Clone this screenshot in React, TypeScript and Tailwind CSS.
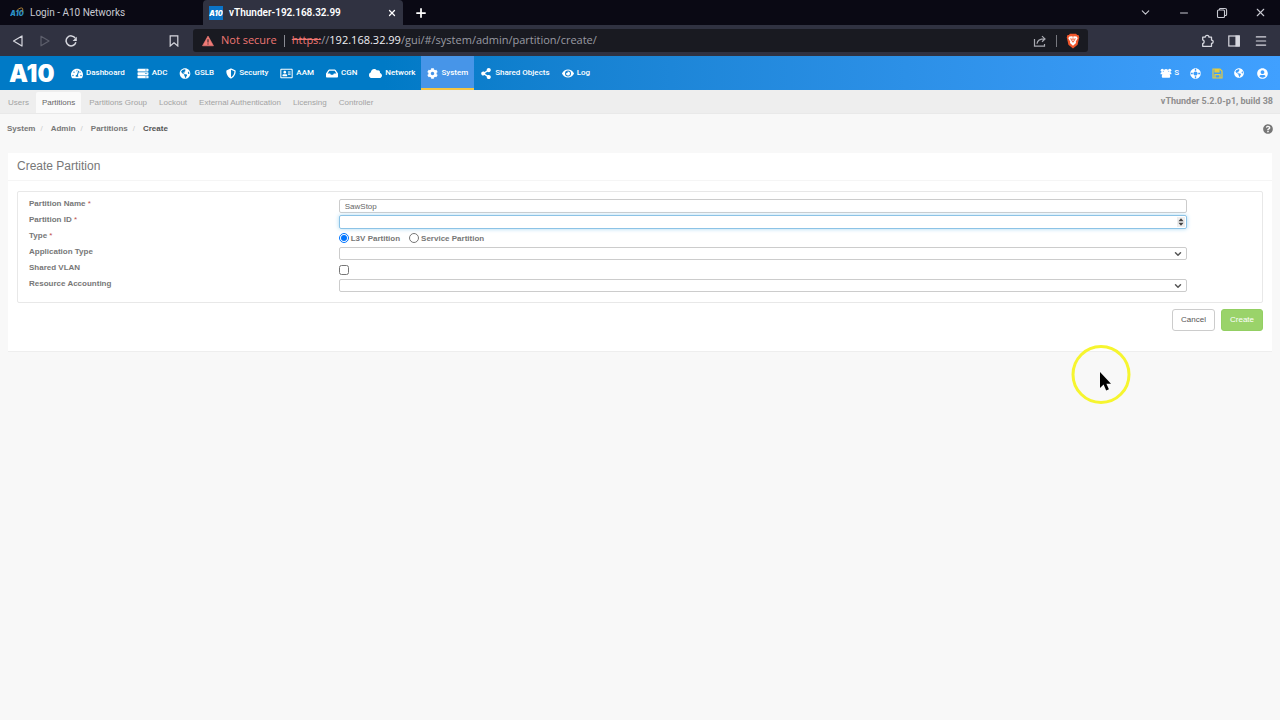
import type { ReactNode } from "react";
import { ChevronDown, Menu, Minus, Plus, X } from "lucide-react";
import {
  FaCloud,
  FaCog,
  FaEye,
  FaGlobeAmericas,
  FaInbox,
  FaLifeRing,
  FaQuestionCircle,
  FaRegAddressCard,
  FaServer,
  FaShareAlt,
  FaShieldAlt,
  FaTachometerAlt,
  FaUserCircle,
} from "react-icons/fa";

const mainNav = [
  { label: "Dashboard", icon: FaTachometerAlt, size: "w-3" },
  { label: "ADC", icon: FaServer, size: "w-3" },
  { label: "GSLB", icon: FaGlobeAmericas, size: "w-3" },
  { label: "Security", icon: FaShieldAlt, size: "w-2.5" },
  { label: "AAM", icon: FaRegAddressCard, size: "w-[13px]" },
  { label: "CGN", icon: FaInbox, size: "w-3" },
  { label: "Network", icon: FaCloud, size: "w-[13px]" },
  { label: "System", icon: FaCog, size: "w-[11px]", active: true },
  { label: "Shared Objects", icon: FaShareAlt, size: "w-3" },
  { label: "Log", icon: FaEye, size: "w-3" },
];

const subNav = [
  "Users",
  "Partitions",
  "Partitions Group",
  "Lockout",
  "External Authentication",
  "Licensing",
  "Controller",
];

const crumbs = ["System", "Admin", "Partitions"];

function Favicon({ active = false }: { active?: boolean }) {
  return (
    <svg viewBox="0 0 14 14" className="size-3.5 shrink-0" aria-hidden="true">
      {active && <rect width="14" height="14" fill="#0b74c8" />}
      <text
        x="7"
        y="10"
        textAnchor="middle"
        fontSize="7"
        fontWeight="900"
        fontStyle="italic"
        fontFamily="Inter, sans-serif"
        fill={active ? "#ffffff" : "#2b8fc4"}
      >
        A10
      </text>
      {!active && <path d="M7 4.5C9 2 12.5 1 12.8 3c.1 1-.3 2-.9 3" fill="none" stroke="#b98a3a" strokeWidth="0.9" />}
    </svg>
  );
}

function TabStrip() {
  return (
    <div className="flex h-[25px] items-center bg-[#0a0914] font-[Roboto,sans-serif] text-[#c9cad2]">
      <div className="flex w-[203px] shrink-0 items-center gap-1.5 pl-[10px] text-[10px]">
        <Favicon />
        <span>Login - A10 Networks</span>
      </div>
      <div className="flex h-full w-[200px] shrink-0 items-center gap-1.5 rounded-t-sm bg-[#303241] pr-1 pl-1.5 text-[10px] font-semibold text-white">
        <Favicon active />
        <span className="flex-1 whitespace-nowrap">vThunder-192.168.32.99</span>
        <button type="button" aria-label="Close tab" className="p-0.5">
          <X size={10} strokeWidth={3} />
        </button>
      </div>
      <button type="button" aria-label="New tab" className="ml-[11px] text-white">
        <Plus size={14} strokeWidth={3} />
      </button>
      <div className="ml-auto flex items-center gap-[26px] pr-[13px]">
        <button type="button" aria-label="Search tabs">
          <ChevronDown size={13} strokeWidth={2} />
        </button>
        <button type="button" aria-label="Minimize">
          <Minus size={12} strokeWidth={2} />
        </button>
        <button type="button" aria-label="Restore">
          <svg viewBox="0 0 12 12" className="size-3" fill="none" stroke="currentColor" strokeWidth="1.1">
            <rect x="1.5" y="3" width="7" height="7.5" rx="1" />
            <path d="M3.5 3V2.300c0-.5.4-.8.8-.8H9c1 0 1.600.6 1.600 1.600V7.500c0 .6-.3 1-1 1h-1" />
          </svg>
        </button>
        <button type="button" aria-label="Close window">
          <X size={13} strokeWidth={2} />
        </button>
      </div>
    </div>
  );
}

function AddressBar() {
  return (
    <div className="flex h-[31px] items-center bg-[#303241] font-['Open_Sans',sans-serif] text-[#d7d8df]">
      <div className="flex w-[193px] shrink-0 items-center pr-[13px] pl-3">
        <button type="button" aria-label="Back">
          <svg viewBox="0 0 12 12" className="size-3" fill="none" stroke="currentColor" strokeWidth="1.2" strokeLinejoin="round">
            <path d="M1.500 6 10 .9v10.200z" />
          </svg>
        </button>
        <button type="button" aria-label="Forward" className="ml-[15px] text-[#5d5f6c]">
          <svg viewBox="0 0 12 12" className="size-3" fill="none" stroke="currentColor" strokeWidth="1.2" strokeLinejoin="round">
            <path d="M10 6 2 1.200v9.600z" />
          </svg>
        </button>
        <button type="button" aria-label="Reload" className="ml-[14px]">
          <svg viewBox="0 0 12 12" className="size-3" fill="none" stroke="currentColor" strokeWidth="1.5">
            <path d="M10.200 3A5 5 0 1 0 10.900 7.300" />
            <path d="M11.800 1.800v4.200H7.600z" fill="currentColor" stroke="none" />
          </svg>
        </button>
        <button type="button" aria-label="Bookmark" className="ml-auto">
          <svg viewBox="0 0 12 12" className="size-3" fill="none" stroke="currentColor" strokeWidth="1.200">
            <path d="M2.200.8h7.600v10.200L6 7.800 2.200 11z" />
          </svg>
        </button>
      </div>
      <div className="flex h-[23px] flex-1 items-center rounded-[3px] bg-[#191a21] pr-2 pl-[9px] text-[11px] whitespace-nowrap">
        <svg viewBox="0 0 12 12" className="size-3" aria-hidden="true">
          <path d="M6 1 11.500 10.800H.5z" fill="#f07a76" stroke="#f07a76" strokeWidth="0.600" strokeLinejoin="round" />
          <path d="M5.500 4.200h1v3.400h-1zM5.500 8.400h1v1h-1z" fill="#191a21" />
        </svg>
        <span className="ml-[7px] text-[#ef7672]">Not secure</span>
        <span className="mx-[7px] h-3 w-px bg-[#8a8b93]" />
        <span className="text-[#ef7672] line-through">https:</span>
        <span className="text-[#9a9ba3]">//</span>
        <span className="text-[#f0f0f4]">192.168.32.99</span>
        <span className="text-[#9a9ba3]">/gui/#/system/admin/partition/create/</span>
        <div className="ml-auto flex items-center gap-[9px]">
          <svg viewBox="0 0 14 12" className="h-3 w-3.5" fill="none" stroke="#a9aab2" strokeWidth="1.200">
            <path d="M1.500 4v7.200h10V9" />
            <path d="M4 8.800C4.300 5.600 6.500 3.900 11.800 3.900M9 1.100l3 2.800-3 2.800" />
          </svg>
          <span className="h-3 w-px bg-[#77787f]" />
          <svg viewBox="0 0 14 16" className="h-4 w-3.5" aria-label="Brave Shields">
            <path d="M4 .8h6l1.200 1.300 1.300-.1.800 2.600-.4 1.100-1.300 6L7 15.600 2.400 11.700 1.100 5.700.7 4.600 1.500 2l1.300.1z" fill="#f1562b" />
            <path d="m3.300 3.600 2.500-.3L7 3.700l1.200-.4 2.500.3 1 1.700-1.900 3.300.2 1.300L7 12.800 4 9.900l.2-1.300-1.900-3.300z" fill="#fff" />
            <path d="m4.200 5.800 1.800.5-.3 1.200L7 9.300l1.300-1.800L8 6.300l1.800-.5M7 4.500v3" fill="none" stroke="#f1562b" strokeWidth="0.900" />
          </svg>
        </div>
      </div>
      <div className="flex w-48 shrink-0 items-center justify-end gap-[14px] pr-3">
        <button type="button" aria-label="Extensions">
          <svg viewBox="0 0 14 14" className="size-3.5" fill="none" stroke="currentColor" strokeWidth="1.300" strokeLinejoin="round">
            <path d="M2.700 3.200h2.500a1.900 1.900 0 0 1 3.800 0h2.500v2.900a1.700 1.700 0 0 1 0 3.400v2.800H2.700V9.600a1.900 1.900 0 0 0 0-3.700z" />
          </svg>
        </button>
        <button type="button" aria-label="Sidebar">
          <svg viewBox="0 0 12 12" className="size-3" fill="none" stroke="currentColor" strokeWidth="1.200">
            <rect x="0.800" y="1" width="10.400" height="10" />
            <path d="M8 1h3.200v10H8z" fill="currentColor" />
          </svg>
        </button>
        <button type="button" aria-label="Menu">
          <Menu size={14} strokeWidth={2} />
        </button>
      </div>
    </div>
  );
}

function MainHeader() {
  return (
    <header className="flex h-[34px] items-center bg-linear-to-r from-[#007ac6] from-30% to-[#40a0ff] font-[Roboto,sans-serif] text-[8px] font-medium text-white">
      <a href="#home" aria-label="A10 home" className="w-[58px] shrink-0 pt-0.5 pl-[9px] font-[Inter,sans-serif] text-[24px] leading-none font-black">
        A10
      </a>
      <nav className="ml-[7px] flex h-full">
        {mainNav.map(({ label, icon: Icon, size, active }) => (
          <a
            key={label}
            href="#nav"
            className={`flex items-center gap-[3px] border-b-2 px-1.5 pt-0.5 whitespace-nowrap ${
              active ? "border-[#f4c542] bg-[#4795e8]" : "border-transparent"
            }`}
          >
            <Icon className={`h-[11px] ${size}`} />
            {label}
          </a>
        ))}
      </nav>
      <div className="ml-auto flex items-center gap-[11px] pr-3">
        <button type="button" className="flex items-center gap-0.5">
          <svg viewBox="0 0 12 10" className="h-2.5 w-3" fill="currentColor" aria-hidden="true">
            <circle cx="2.300" cy="2.300" r="1.600" />
            <circle cx="9.700" cy="2.300" r="1.600" />
            <circle cx="6" cy="3.200" r="2.200" />
            <path d="M.5 6.300C.5 4.800 1 4 2.200 4h7.600c1.200 0 1.700.8 1.700 2.300H9.700c.4.800.5 1.600.5 2.200 0 .9-.5 1.300-1.300 1.300H3.100c-.8 0-1.300-.4-1.300-1.300 0-.6.1-1.400.5-2.200z" />
          </svg>
          <span>S</span>
        </button>
        <button type="button" aria-label="Support">
          <FaLifeRing size={11} className="rotate-45" />
        </button>
        <button type="button" aria-label="Save" className="text-[#e8cc3c]">
          <svg viewBox="0 0 11 11" className="size-[11px]" fill="none" stroke="currentColor" strokeWidth="1.200" aria-hidden="true">
            <path d="M1 1h7l2 2v7H1z" />
            <path d="M3 1.500h4v2.300H3z" fill="currentColor" />
            <path d="M3 10V6.600h5V10" />
          </svg>
        </button>
        <button type="button" aria-label="Language">
          <FaGlobeAmericas size={10} />
        </button>
        <button type="button" aria-label="Account" className="ml-0.5">
          <FaUserCircle size={11} />
        </button>
      </div>
    </header>
  );
}

function SubHeader() {
  return (
    <div className="flex h-6 items-stretch border-b border-[#e9e9e9] bg-[#eeeeee] pl-0.5 text-[8px]">
      {subNav.map((label) => (
        <a
          key={label}
          href="#sub"
          className={`mt-0.5 flex items-center px-1.5 ${
            label === "Partitions" ? "mr-0.5 ml-px rounded-t-xs bg-[#fafafa] text-[#666666]" : "text-[#a3a3a3]"
          }`}
        >
          {label}
        </a>
      ))}
      <span className="ml-auto self-center pr-[7px] font-[Roboto,sans-serif] text-[9px] font-bold text-[#8f8f8f]">
        vThunder 5.2.0-p1, build 38
      </span>
    </div>
  );
}

function Breadcrumbs() {
  return (
    <div className="flex h-[28px] items-center justify-between px-[7px] pt-px text-[8px] font-bold text-[#777777]">
      <nav className="flex items-center" aria-label="Breadcrumb">
        {crumbs.map((c) => (
          <span key={c} className="flex">
            <a href="#crumb">{c}</a>
            <span className="mr-2 ml-[5px] font-normal text-[#cccccc]">/</span>
          </span>
        ))}
        <span className="text-[#555555]">Create</span>
      </nav>
      <button type="button" aria-label="Help">
        <FaQuestionCircle size={10} />
      </button>
    </div>
  );
}

function Row({ label, htmlFor, required, children }: { label: string; htmlFor: string; required?: boolean; children: ReactNode }) {
  return (
    <div className="grid h-[14px] grid-cols-[310fr_849fr_64fr]">
      <label htmlFor={htmlFor} className="leading-[10px] font-bold text-[#777777]">
        {label}
        {required && <span className="font-normal text-[#c05050]"> *</span>}
      </label>
      {children}
    </div>
  );
}

function SelectBox({ id }: { id: string }) {
  return (
    <div className="relative">
      <select id={id} defaultValue="" className="block h-[13px] w-full appearance-none rounded-xs border border-[#cccccc] bg-white px-1">
        <option value="" />
      </select>
      <ChevronDown size={10} strokeWidth={3.5} className="pointer-events-none absolute top-0.5 right-1 text-[#555555]" />
    </div>
  );
}

function PartitionForm() {
  return (
    <form className="mx-2 mt-[11px] border-b border-[#eeeeee] bg-white pb-5 text-[8px]">
      <h1 className="h-7 border-b border-[#f5f5f5] px-[9px] text-[12px] leading-[26px] text-[#777777]">Create Partition</h1>
      <div className="px-[9px] pt-[10px]">
        <div className="flex flex-col gap-0.5 rounded-xs border border-[#e8e8e8] px-[11px] pt-[7px] pb-[9px]">
          <Row label="Partition Name" htmlFor="name" required>
            <input id="name" type="text" defaultValue="SawStop" className="h-[14px] w-full rounded-xs border border-[#cccccc] px-[5px] text-[#666666]" />
          </Row>
          <Row label="Partition ID" htmlFor="pid" required>
            <div className="relative">
              <input
                id="pid"
                type="number"
                className="block h-[14px] w-full appearance-none rounded-xs border border-[#8cc3e6] px-[5px] shadow-[0_0_4px_#a9d8f2] outline-none [appearance:textfield]"
              />
              <svg viewBox="0 0 8 10" className="pointer-events-none absolute top-0.5 right-0.5 h-2.5 w-2" aria-hidden="true">
                <rect width="8" height="10" fill="#eeeeee" />
                <path d="M4 1.200 6.600 4.300H1.400zM4 8.800 1.400 5.700h5.200z" fill="#444444" />
              </svg>
            </div>
          </Row>
          <Row label="Type" htmlFor="l3v" required>
            <div className="flex items-center font-bold text-[#777777]">
              <input id="l3v" type="radio" name="type" defaultChecked className="size-[10px]" />
              <label htmlFor="l3v" className="mr-[9px] ml-0.5 pt-0.5">
                L3V Partition
              </label>
              <input id="service" type="radio" name="type" className="size-[10px]" />
              <label htmlFor="service" className="ml-0.5 pt-0.5">
                Service Partition
              </label>
            </div>
          </Row>
          <Row label="Application Type" htmlFor="app">
            <SelectBox id="app" />
          </Row>
          <Row label="Shared VLAN" htmlFor="vlan">
            <input id="vlan" type="checkbox" className="size-[10px] self-center" />
          </Row>
          <Row label="Resource Accounting" htmlFor="acct">
            <SelectBox id="acct" />
          </Row>
        </div>
        <div className="mt-1.5 flex justify-end gap-1.5">
          <button type="button" className="h-[22px] rounded-[3px] border border-[#cccccc] bg-white px-2 text-[#555555]">
            Cancel
          </button>
          <button type="submit" className="h-[22px] rounded-[3px] border border-[#93cf63] bg-[#9ad36a] px-2 text-white">
            Create
          </button>
        </div>
      </div>
    </form>
  );
}

function Pointer() {
  return (
    <svg viewBox="0 0 60 60" className="pointer-events-none absolute top-[345px] left-[1071px] size-[60px]" aria-hidden="true">
      <circle cx="30" cy="29.500" r="28" fill="none" stroke="#f6f52f" strokeWidth="3" />
      <path d="M29 27v16l3.600-3.400L35.200 45.500l2.700-1.200-2.500-5.600H40z" fill="#000000" />
    </svg>
  );
}

export default function App() {
  return (
    <div className="relative min-h-screen overflow-hidden bg-[#f8f8f8] font-['Liberation_Sans',Arial,sans-serif]">
      <TabStrip />
      <AddressBar />
      <MainHeader />
      <SubHeader />
      <Breadcrumbs />
      <PartitionForm />
      <Pointer />
    </div>
  );
}
